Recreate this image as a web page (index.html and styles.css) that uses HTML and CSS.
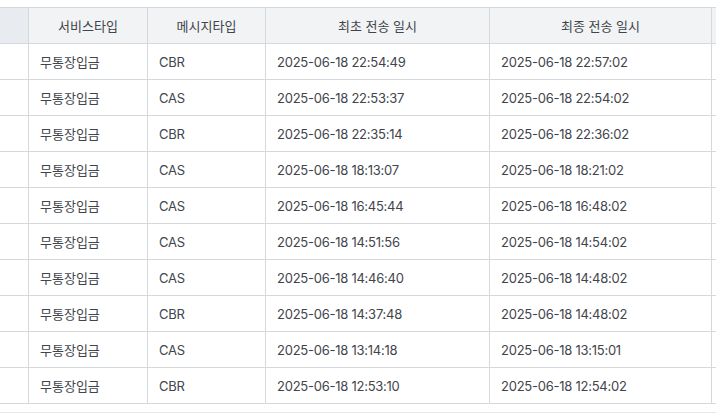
FILE: index.html
```html
<!DOCTYPE html>
<html lang="ko">
<head>
<meta charset="utf-8">
<link rel="stylesheet" href="styles.css">
</head>
<body>
<div class="wrap">
  <div class="grid">
    <div class="row head">
      <div class="cell first"></div>
      <div class="cell">서비스타입</div>
      <div class="cell">메시지타입</div>
      <div class="cell">최초 전송 일시</div>
      <div class="cell">최종 전송 일시</div>
      <div class="cell last"></div>
    </div>
    <div class="row"><div class="cell first"></div><div class="cell ko">무통장입금</div><div class="cell">CBR</div><div class="cell">2025-06-18 22:54:49</div><div class="cell">2025-06-18 22:57:02</div><div class="cell last"></div></div>
    <div class="row"><div class="cell first"></div><div class="cell ko">무통장입금</div><div class="cell">CAS</div><div class="cell">2025-06-18 22:53:37</div><div class="cell">2025-06-18 22:54:02</div><div class="cell last"></div></div>
    <div class="row"><div class="cell first"></div><div class="cell ko">무통장입금</div><div class="cell">CBR</div><div class="cell">2025-06-18 22:35:14</div><div class="cell">2025-06-18 22:36:02</div><div class="cell last"></div></div>
    <div class="row"><div class="cell first"></div><div class="cell ko">무통장입금</div><div class="cell">CAS</div><div class="cell">2025-06-18 18:13:07</div><div class="cell">2025-06-18 18:21:02</div><div class="cell last"></div></div>
    <div class="row"><div class="cell first"></div><div class="cell ko">무통장입금</div><div class="cell">CAS</div><div class="cell">2025-06-18 16:45:44</div><div class="cell">2025-06-18 16:48:02</div><div class="cell last"></div></div>
    <div class="row"><div class="cell first"></div><div class="cell ko">무통장입금</div><div class="cell">CAS</div><div class="cell">2025-06-18 14:51:56</div><div class="cell">2025-06-18 14:54:02</div><div class="cell last"></div></div>
    <div class="row"><div class="cell first"></div><div class="cell ko">무통장입금</div><div class="cell">CAS</div><div class="cell">2025-06-18 14:46:40</div><div class="cell">2025-06-18 14:48:02</div><div class="cell last"></div></div>
    <div class="row"><div class="cell first"></div><div class="cell ko">무통장입금</div><div class="cell">CBR</div><div class="cell">2025-06-18 14:37:48</div><div class="cell">2025-06-18 14:48:02</div><div class="cell last"></div></div>
    <div class="row"><div class="cell first"></div><div class="cell ko">무통장입금</div><div class="cell">CAS</div><div class="cell">2025-06-18 13:14:18</div><div class="cell">2025-06-18 13:15:01</div><div class="cell last"></div></div>
    <div class="row"><div class="cell first"></div><div class="cell ko">무통장입금</div><div class="cell">CBR</div><div class="cell">2025-06-18 12:53:10</div><div class="cell">2025-06-18 12:54:02</div><div class="cell last"></div></div>
  </div>
  <div class="footer-line"></div>
</div>
</body>
</html>
```

FILE: styles.css
```css
* { box-sizing: border-box; }
html, body { margin: 0; padding: 0; background: #fff; }
body {
  font-family: Inter, "Noto Sans CJK KR", sans-serif;
  font-size: 13px;
  color: #41454b;
}
.wrap {
  padding-top: 7px;
  width: 716px;
  height: 420px;
  overflow: hidden;
}
.grid {
  border-top: 1px solid #d5d8dc;
}
.row {
  display: grid;
  grid-template-columns: 29px 119px 118px 224px 222px 1fr;
  height: 36px;
}
.cell {
  border-right: 1px solid #d5d8dc;
  border-bottom: 1px solid #d5d8dc;
  padding-left: 11px;
  display: flex;
  align-items: center;
  white-space: nowrap;
  letter-spacing: -0.25px;
}
.cell.ko {
  padding-left: 11px;
  letter-spacing: 0;
}
.cell.last { border-right: none; }
.head .cell {
  background: #f2f3f5;
  justify-content: center;
  padding-left: 0;
  letter-spacing: 0;
}
.head .cell.first { background: #e8ebef; }
.footer-line {
  margin-top: 8px;
  border-top: 1px solid #e6e8eb;
}
```
